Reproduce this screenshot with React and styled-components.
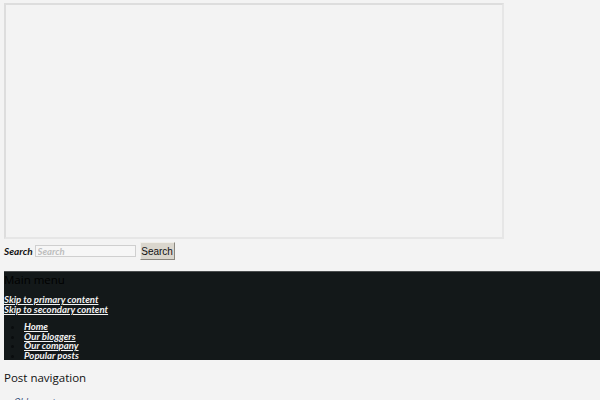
import React from 'react'
import styled, { createGlobalStyle } from 'styled-components'

const GlobalStyle = createGlobalStyle`
  html, body {
    margin: 0;
    padding: 0;
    background: #f3f3f3;
    overflow: hidden;
  }
`

const Page = styled.div`
  padding: 3px 0 0 4px;
  font-family: 'Open Sans', 'DejaVu Sans', sans-serif;
  color: #111;
`

const Frame = styled.div`
  width: 496px;
  height: 232px;
  border: 2px solid #dddddd;
  border-right-color: #e6e6e6;
  border-bottom-color: #e6e6e6;
  background: #f3f3f3;
`

const SearchForm = styled.form`
  display: flex;
  align-items: center;
  gap: 3px;
  margin-top: 3px;
  height: 18px;
`

const SearchLabel = styled.label`
  font-family: Lato, 'DejaVu Sans', sans-serif;
  font-weight: 700;
  font-style: italic;
  font-size: 10px;
  color: #111;
  margin-right: -1px;
`

const SearchInput = styled.input`
  box-sizing: border-box;
  width: 101px;
  height: 12px;
  margin: 0;
  padding: 0 2px;
  border: 1px solid #cfcfcf;
  background: #f6f6f6;
  font-family: Lato, 'DejaVu Sans', sans-serif;
  font-weight: 700;
  font-style: italic;
  font-size: 9.5px;
  &::placeholder {
    color: #bdbdbd;
  }
`

const SearchButton = styled.button`
  box-sizing: border-box;
  width: 35px;
  height: 18px;
  margin: 0 0 0 1px;
  padding: 0;
  border: 1px solid #8a877f;
  border-top-color: #f0eee8;
  border-left-color: #f0eee8;
  background: #dad6cd;
  font-family: 'Liberation Sans', Arial, sans-serif;
  font-size: 10px;
  color: #111;
`

const NavBand = styled.nav`
  margin-top: 11px;
  height: 89px;
  background: #131819;
  border-top: 1px solid #4a4d4e;
  box-sizing: border-box;
`

const NavHeading = styled.h3`
  margin: 0;
  padding-top: 1px;
  font-weight: 400;
  font-size: 11.5px;
  line-height: 13px;
  color: #000;
`

const NavLink = styled.a`
  font-family: Lato, 'DejaVu Sans', sans-serif;
  font-weight: 700;
  font-style: italic;
  font-size: 9.6px;
  line-height: 9.5px;
  color: #f2f2f2;
  text-decoration: underline;
`

const SkipLinks = styled.div`
  display: flex;
  flex-direction: column;
  align-items: flex-start;
  margin-top: 9px;
  line-height: 9.5px;
`

const MenuList = styled.ul`
  margin: 8px 0 0;
  padding-left: 20px;
  line-height: 9.5px;
  font-size: 9px;
`

const MenuItem = styled.li`
  line-height: 9.5px;
  color: #0a0d0e;
`

const PostNav = styled.div`
  margin-top: 11px;
`

const PostNavHeading = styled.h3`
  margin: 0;
  font-weight: 400;
  font-size: 11.5px;
  line-height: 14px;
  color: #111;
`

const OlderLink = styled.a`
  display: block;
  margin-top: 10px;
  font-family: 'Open Sans', 'DejaVu Sans', sans-serif;
  font-style: italic;
  font-size: 9px;
  color: #243a6e;
  text-decoration: none;
`

const menu = ['Home', 'Our bloggers ', 'Our company', 'Popular posts']

const App = () => {
  return (
    <Page>
      <GlobalStyle />
      <Frame />
      <SearchForm onSubmit={e => e.preventDefault()}>
        <SearchLabel htmlFor="s">Search</SearchLabel>
        <SearchInput id="s" placeholder="Search" />
        <SearchButton type="submit">Search</SearchButton>
      </SearchForm>
      <NavBand>
        <NavHeading>Main menu</NavHeading>
        <SkipLinks>
          <NavLink href="#">Skip to primary content</NavLink>
          <NavLink href="#">Skip to secondary content </NavLink>
        </SkipLinks>
        <MenuList>
          {menu.map(item => (
            <MenuItem key={item}>
              <NavLink href="#">{item}</NavLink>
            </MenuItem>
          ))}
        </MenuList>
      </NavBand>
      <PostNav>
        <PostNavHeading>Post navigation</PostNavHeading>
        <OlderLink href="#">← Older posts</OlderLink>
      </PostNav>
    </Page>
  )
}

export default App
